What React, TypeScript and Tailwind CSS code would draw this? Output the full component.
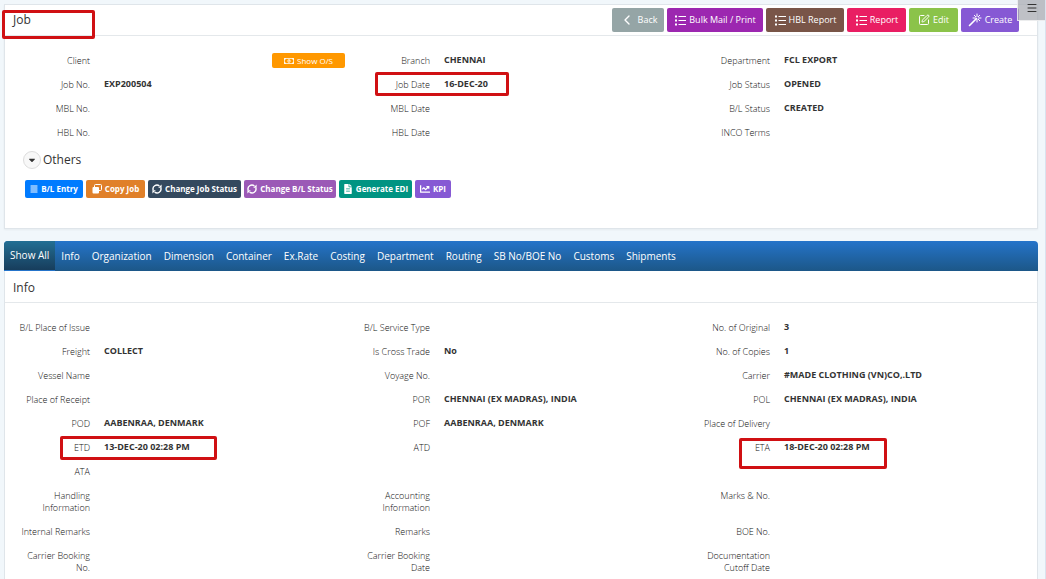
import type { ReactNode } from "react";
import { ChevronLeft, Menu, SquarePen } from "lucide-react";
import { FaAlignJustify, FaCaretDown, FaChartLine, FaFileAlt, FaRegMoneyBillAlt } from "react-icons/fa";

type Field = { label: string; value?: string; mark?: string; action?: boolean } | null;

const jobRows: Field[][] = [
  [{ label: "Client", action: true }, { label: "Branch", value: "CHENNAI" }, { label: "Department", value: "FCL EXPORT" }],
  [
    { label: "Job No.", value: "EXP200504" },
    { label: "Job Date", value: "16-DEC-20", mark: "-top-px left-[21px] h-[24px] w-[134px]" },
    { label: "Job Status", value: "OPENED" },
  ],
  [{ label: "MBL No." }, { label: "MBL Date" }, { label: "B/L Status", value: "CREATED" }],
  [{ label: "HBL No." }, { label: "HBL Date" }, { label: "INCO Terms" }],
];

const infoRows: Field[][] = [
  [{ label: "B/L Place of Issue" }, { label: "B/L Service Type" }, { label: "No. of Original", value: "3" }],
  [{ label: "Freight", value: "COLLECT" }, { label: "Is Cross Trade", value: "No" }, { label: "No. of Copies", value: "1" }],
  [{ label: "Vessel Name" }, { label: "Voyage No." }, { label: "Carrier", value: "#MADE CLOTHING (VN)CO,.LTD" }],
  [
    { label: "Place of Receipt" },
    { label: "POR", value: "CHENNAI (EX MADRAS), INDIA" },
    { label: "POL", value: "CHENNAI (EX MADRAS), INDIA" },
  ],
  [{ label: "POD", value: "AABENRAA, DENMARK" }, { label: "POF", value: "AABENRAA, DENMARK" }, { label: "Place of Delivery" }],
  [
    { label: "ETD", value: "13-DEC-20 02:28 PM", mark: "top-0 left-[46px] h-[24px] w-[157px]" },
    { label: "ATD" },
    { label: "ETA", value: "18-DEC-20 02:28 PM", mark: "top-0.5 left-[45px] h-[31px] w-[148px]" },
  ],
  [{ label: "ATA" }, null, null],
  [{ label: "Handling Information" }, { label: "Accounting Information" }, { label: "Marks & No." }],
  [{ label: "Internal Remarks" }, { label: "Remarks" }, { label: "BOE No." }],
  [{ label: "Carrier Booking No." }, { label: "Carrier Booking Date" }, { label: "Documentation Cutoff Date" }],
];

const tabs = [
  "Show All", "Info", "Organization", "Dimension", "Container", "Ex.Rate", "Costing",
  "Department", "Routing", "SB No/BOE No", "Customs", "Shipments",
];

function ListIcon() {
  return (
    <svg viewBox="0 0 12 12" className="size-3" fill="none" stroke="currentColor">
      <path d="M4.5 2.5H12M4.5 6.5H12M4.5 10.5H12" />
      <path d="M1 2.5h2M1 6.5h2M1 10.5h2" strokeWidth="2" />
    </svg>
  );
}

function WandIcon() {
  return (
    <svg viewBox="0 0 14 14" className="size-3.5" fill="none" stroke="currentColor" strokeWidth="1" strokeLinecap="round">
      <path d="M1.5 12.5 8.5 5.5" strokeWidth="1.6" />
      <path d="M9 1v2.5M9 6.5V9M5 5h2.5M10.5 5H13M6.3 2.3l1.4 1.4M11.7 2.3l-1.4 1.4M11.7 7.7l-1.4-1.4" />
    </svg>
  );
}

function SyncIcon() {
  return (
    <svg viewBox="0 0 10 10" className="size-2.5" fill="none" stroke="currentColor" strokeWidth="1.4">
      <path d="M1.2 6.2A3.9 3.9 0 0 1 7.4 2" />
      <path d="M8.8 3.8A3.9 3.9 0 0 1 2.6 8" />
      <path d="M9.6.4v3.4H6.2ZM.4 9.6V6.2h3.4Z" fill="currentColor" stroke="none" />
    </svg>
  );
}

function CopyIcon() {
  return (
    <svg viewBox="0 0 10 10" className="size-2.5" fill="currentColor">
      <path d="M3.5.5h5a1 1 0 0 1 1 1v4a1 1 0 0 1-1 1h-5a1 1 0 0 1-1-1v-4a1 1 0 0 1 1-1Z" fill="none" stroke="currentColor" />
      <path d="M1.5 3H6a1 1 0 0 1 1 1v4.5a1 1 0 0 1-1 1H1.5a1 1 0 0 1-1-1V4a1 1 0 0 1 1-1Z" />
    </svg>
  );
}

function HeaderButton({ icon, color, children }: { icon: ReactNode; color: string; children: string }) {
  return (
    <button className={`flex h-6 items-center justify-center gap-[3px] rounded-xs text-[9px] font-medium whitespace-nowrap text-white ${color}`}>
      {icon}
      {children}
    </button>
  );
}

function SmallButton({ icon, color, children }: { icon: ReactNode; color: string; children: string }) {
  return (
    <button className={`flex h-[18px] items-center justify-center gap-[3px] rounded-xs text-[8px] font-bold whitespace-nowrap text-white ${color}`}>
      {icon}
      {children}
    </button>
  );
}

function FieldGrid({ rows }: { rows: Field[][] }) {
  return (
    <div className="pt-[13px] pr-[3px] pl-[9px]">
      {rows.map((row, i) => (
        <dl key={i} className="grid grid-cols-3">
          {row.map((field, j) =>
            field ? (
              <div key={j} className="relative flex gap-3.5 py-1.5 text-[9px] leading-3">
                <dt className="w-[76px] shrink-0 text-right font-light text-[#111]">{field.label}</dt>
                <dd className="-mt-px flex-1 font-bold whitespace-nowrap text-[#333]">{field.value}</dd>
                {field.action && (
                  <button className="-my-0.5 mr-[9px] flex h-[15px] w-[73px] items-center justify-center gap-[3px] rounded-xs bg-[#ff9800] text-[8px] font-medium text-white">
                    <FaRegMoneyBillAlt className="size-2.5" />
                    Show O/S
                  </button>
                )}
                {field.mark && <span className={`absolute rounded-xs border-3 border-[#d01013] ${field.mark}`} />}
              </div>
            ) : (
              <div key={j} />
            ),
          )}
        </dl>
      ))}
    </div>
  );
}

export default function App() {
  return (
    <div className="relative h-screen overflow-hidden border-r border-[#d9e2ee] bg-[#f1f7fb] pt-1 pr-[7px] pl-1 font-['Open_Sans','Noto_Sans',sans-serif] text-[#333]">
      {/* Job card */}
      <section className="border border-[#dfe5ea] bg-white pb-[30px] shadow-xs">
        <header className="relative flex h-[31px] items-center justify-between border-b border-[#e4e8eb] pr-[18px] pl-2">
          <h1 className="text-[12px] leading-4">Job</h1>
          <span className="absolute top-[5px] -left-[3px] h-[29px] w-[93px] rounded-xs border-3 border-[#d01013]" />
          <div className="flex gap-[3px]">
            <HeaderButton icon={<ChevronLeft className="size-4" />} color="w-[52px] bg-[#95a5a6]">Back</HeaderButton>
            <HeaderButton icon={<ListIcon />} color="w-[96px] bg-[#9c27b0]">Bulk Mail / Print</HeaderButton>
            <HeaderButton icon={<ListIcon />} color="w-[78px] bg-[#795548]">HBL Report</HeaderButton>
            <HeaderButton icon={<ListIcon />} color="w-[59px] bg-[#e91e63]">Report</HeaderButton>
            <HeaderButton icon={<SquarePen className="size-3" />} color="w-[49px] bg-[#8bc34a]">Edit</HeaderButton>
            <HeaderButton icon={<WandIcon />} color="w-[58px] bg-[#8659d4]">Create</HeaderButton>
          </div>
        </header>

        <FieldGrid rows={jobRows} />

        <div className="mt-1.5 flex items-center gap-0.5 pl-[18px]">
          <button aria-label="Toggle others" className="flex size-[18px] items-center justify-center rounded-full border border-[#ddd] bg-[#f8f8f8]">
            <FaCaretDown className="size-2.5" />
          </button>
          <h2 className="text-[12px] leading-4">Others</h2>
        </div>

        <div className="mt-[11px] flex gap-[3px] pl-5">
          <SmallButton icon={<FaAlignJustify className="size-2" />} color="w-[58px] bg-[#007bff]">B/L Entry</SmallButton>
          <SmallButton icon={<CopyIcon />} color="w-[59px] bg-[#e08029]">Copy Job</SmallButton>
          <SmallButton icon={<SyncIcon />} color="w-[93px] bg-[#34495e]">Change Job Status</SmallButton>
          <SmallButton icon={<SyncIcon />} color="w-[92px] bg-[#9b59b6]">Change B/L Status</SmallButton>
          <SmallButton icon={<FaFileAlt className="size-2.5" />} color="w-[73px] bg-[#009482]">Generate EDI</SmallButton>
          <SmallButton icon={<FaChartLine className="size-2.5" />} color="w-[36px] bg-[#8659d4]">KPI</SmallButton>
        </div>
      </section>

      {/* Tabs */}
      <nav className="mt-3 flex h-[30px] overflow-hidden rounded-t bg-linear-to-b from-[#2574ca] to-[#1c5788] text-[10px] text-white">
        {tabs.map((tab, i) => (
          <a
            key={tab}
            href="#"
            className={
              i === 0
                ? "flex items-center border-b border-[#2574ca] bg-linear-to-b from-[#226f94] to-[#173d5c] px-1.5 whitespace-nowrap"
                : "flex items-center px-1.5 whitespace-nowrap"
            }
          >
            {tab}
          </a>
        ))}
      </nav>

      {/* Info panel */}
      <section className="border-x border-[#dfe5ea] bg-white">
        <h2 className="flex h-8 items-center border-b border-[#e4e8eb] pt-0.5 pl-2 text-[12px] leading-4">Info</h2>
        <FieldGrid rows={infoRows} />
      </section>

      {/* Side menu toggle */}
      <button aria-label="Menu" className="absolute top-0 right-0 flex h-[21px] w-7 items-start justify-center border-b border-l border-white/70 bg-[#a9acb3]/75 pt-0.5">
        <Menu className="size-3 text-[#333]" />
      </button>
    </div>
  );
}
